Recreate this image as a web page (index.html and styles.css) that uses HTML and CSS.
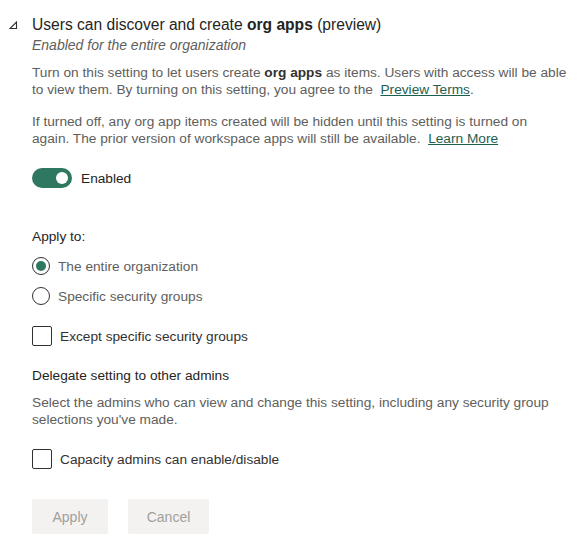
FILE: index.html
```html
<!DOCTYPE html>
<html>
<head>
<meta charset="utf-8">
<link rel="stylesheet" href="styles.css">
</head>
<body>
<div class="setting">
  <div class="header">
    <svg class="chev" width="9" height="9" viewBox="0 0 9 9"><path d="M7.5 1 L7.5 7.5 L1 7.5 Z" fill="none" stroke="#323130" stroke-width="1.1" stroke-linejoin="miter"/></svg>
    <div class="title">Users can discover and create <b>org apps</b> (preview)</div>
  </div>
  <div class="subtitle">Enabled for the entire organization</div>
  <p class="desc p1">Turn on this setting to let users create <b>org apps</b> as items. Users with access will be able to view them. By turning on this setting, you agree to the&nbsp; <a class="link">Preview Terms</a>.</p>
  <p class="desc p2">If turned off, any org app items created will be hidden until this setting is turned on again. The prior version of workspace apps will still be available.&nbsp; <a class="link">Learn More</a></p>
  <div class="toggle-row">
    <span class="toggle"><span class="knob"></span></span>
    <span class="toggle-label">Enabled</span>
  </div>
  <div class="label apply">Apply to:</div>
  <div class="radio-row"><span class="radio checked"><span class="dot"></span></span><span class="opt">The entire organization</span></div>
  <div class="radio-row"><span class="radio"></span><span class="opt">Specific security groups</span></div>
  <div class="check-row first"><span class="check"></span><span class="opt">Except specific security groups</span></div>
  <div class="label delegate">Delegate setting to other admins</div>
  <p class="desc p3">Select the admins who can view and change this setting, including any security group selections you've made.</p>
  <div class="check-row second"><span class="check"></span><span class="opt">Capacity admins can enable/disable</span></div>
  <div class="buttons">
    <button class="btn apply-btn">Apply</button>
    <button class="btn cancel-btn">Cancel</button>
  </div>
</div>
</body>
</html>
```
FILE: styles.css
```css
html, body {
  margin: 0;
  padding: 0;
  background: #ffffff;
}
body {
  font-family: "Liberation Sans", Arial, sans-serif;
  color: #323130;
  width: 585px;
}
.setting {
  padding: 15px 0 0 32px;
  width: 540px;
}
.header {
  position: relative;
  display: flex;
}
.chev {
  position: absolute;
  left: -23px;
  top: 6px;
}
.title {
  font-size: 15.6px;
  line-height: 20px;
  color: #252423;
}
.title b { font-weight: 700; }
.subtitle {
  font-size: 14px;
  font-style: italic;
  line-height: 18px;
  color: #605e5c;
  margin-top: 1px;
}
.desc {
  font-size: 13.7px;
  line-height: 17px;
  color: #605e5c;
  margin: 0;
}
.desc b { color: #323130; }
.p1 { margin-top: 10px; }
.p2 { margin-top: 15px; max-width: 525px; }
.link {
  color: #1d5e4f;
  text-decoration: underline;
}
.toggle-row {
  display: flex;
  align-items: center;
  gap: 9px;
  margin-top: 21px;
  height: 20px;
}
.toggle {
  height: 18px;
  border-radius: 10px;
  background: #2e7862;
  display: flex;
  align-items: center;
  justify-content: flex-end;
  padding: 1px 4px;
  box-sizing: content-box;
  width: 32px;
}
.knob {
  width: 12px;
  height: 12px;
  border-radius: 50%;
  background: #fff;
}
.toggle-label {
  font-size: 13.7px;
  color: #252423;
}
.label {
  font-size: 13.7px;
  line-height: 20px;
  color: #252423;
}
.apply { margin-top: 39px; }
.radio-row {
  display: flex;
  align-items: center;
  height: 30px;
  gap: 8px;
}
.apply + .radio-row { margin-top: 4px; }
.radio {
  width: 16px;
  height: 16px;
  border: 1px solid #323130;
  border-radius: 50%;
  display: flex;
  align-items: center;
  justify-content: center;
  flex: none;
}
.dot {
  width: 10px;
  height: 10px;
  border-radius: 50%;
  background: #2e7862;
}
.opt {
  font-size: 13.7px;
  color: #605e5c;
}
.check-row {
  display: flex;
  align-items: center;
  gap: 8px;
  height: 20px;
}
.check-row.first { margin-top: 15px; }
.check {
  width: 18px;
  height: 18px;
  border: 1px solid #323130;
  border-radius: 2px;
  flex: none;
}
.check-row .opt { color: #323130; }
.delegate { margin-top: 20px; }
.p3 { margin-top: 8px; }
.check-row.second { margin-top: 21px; }
.buttons {
  display: flex;
  gap: 20px;
  margin-top: 30px;
}
.btn {
  font-family: "Liberation Sans", Arial, sans-serif;
  font-size: 14px;
  height: 35px;
  border: none;
  border-radius: 2px;
  background: #f3f2f1;
  color: #a19f9d;
  padding: 0;
}
.apply-btn { width: 76px; }
.cancel-btn { width: 81px; }
```
